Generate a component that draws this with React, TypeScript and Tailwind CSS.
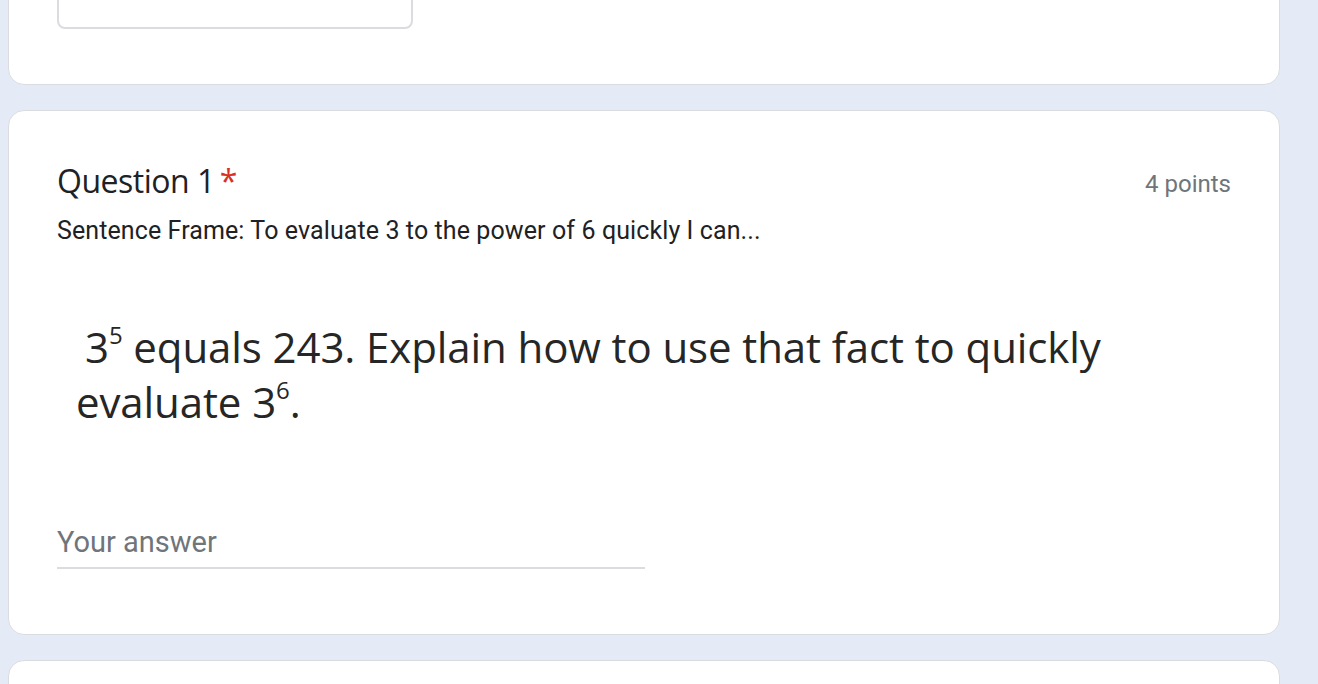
import React from "react";

const sans = { fontFamily: "Roboto, 'Liberation Sans', sans-serif" };
const display = { fontFamily: "'Open Sans', 'Noto Sans', sans-serif" };

export default function App() {
  return (
    <div className="min-h-[684px] w-full overflow-hidden bg-[#e4ebf7]" style={sans}>
      <div className="ml-[8px] flex w-[1272px] flex-col gap-[25px]">
        {/* previous question card, scrolled mostly out of view */}
        <div className="-mt-[100px] rounded-[16px] border border-[#dadce0] bg-white px-[48px] pb-[55px] pt-[40px]">
          <div className="h-[88px] w-[356px] rounded-[8px] border-2 border-[#dadce0]" />
        </div>

        {/* Question 1 */}
        <div className="rounded-[16px] border border-[#dadce0] bg-white px-[48px] pb-[65px] pt-[48px]">
          <div className="flex items-start justify-between">
            <div className="text-[32px] leading-[44px] text-[#202124]" style={display}>
              <span className="tracking-[-0.5px]">Question 1</span>
              <span className="ml-[5px] text-[#d93025]">*</span>
            </div>
            <div className="pt-[9px] text-[24px] leading-[32px] text-[#70757a]">4 points</div>
          </div>
          <div className="mt-[12px] text-[25px] leading-[32px] tracking-[0.1px] text-[#202124]">
            Sentence Frame: To evaluate 3 to the power of 6 quickly I can...
          </div>

          <div className="mt-[72px] pl-[19px] text-[42px] leading-[55px] tracking-[-0.1px] text-[#262626]" style={display}>
            <div className="pl-[9px]">
              3<sup className="top-[-0.8em] text-[24px]">5</sup> equals 243. Explain how to use that fact to quickly
            </div>
            <div>
              evaluate 3<sup className="top-[-0.8em] text-[24px]">6</sup>.
            </div>
          </div>

          <div className="mt-[95px] w-[588px] border-b-2 border-[#dadce0] pb-[7px]">
            <div className="text-[29px] leading-[36px] text-[#70757a]">Your answer</div>
          </div>
        </div>

        {/* next card */}
        <div className="h-[200px] rounded-[16px] border border-[#dadce0] bg-white" />
      </div>
    </div>
  );
}
